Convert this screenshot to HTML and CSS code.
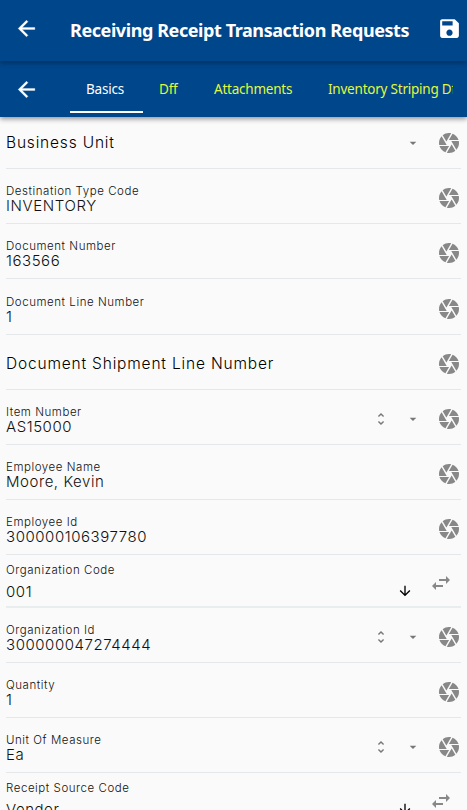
FILE: index.html
```html
<!DOCTYPE html>
<html lang="en">
<head>
<meta charset="utf-8">
<title>Receiving Receipt Transaction Requests</title>
<link rel="stylesheet" href="styles.css">
</head>
<body>
<svg class="defs" width="0" height="0">
<symbol id="back" viewBox="0 0 24 24"><path d="M20 11H7.83l5.59-5.59L12 4l-8 8 8 8 1.41-1.41L7.83 13H20v-2z"/></symbol>
<symbol id="save" viewBox="0 0 24 24"><path d="M17 3H5c-1.11 0-2 .9-2 2v14c0 1.1.89 2 2 2h14c1.1 0 2-.9 2-2V7l-4-4zm-5 16c-1.66 0-3-1.34-3-3s1.34-3 3-3 3 1.34 3 3-1.34 3-3 3zm3-10H5V5h10v4z"/></symbol>
<symbol id="camera" viewBox="0 0 24 24"><path d="M9.4 10.5l4.77-8.26C13.47 2.09 12.75 2 12 2c-2.4 0-4.6.85-6.32 2.25l3.66 6.35.06-.1zM21.54 9c-.92-2.92-3.15-5.26-6-6.34L11.88 9h9.66zm.26 1h-7.49l.29.5 4.76 8.25C21 16.97 22 14.61 22 12c0-.69-.07-1.35-.2-2zM8.54 12l-3.9-6.75C3.01 7.03 2 9.39 2 12c0 .69.07 1.35.2 2h7.49l-1.15-2zm-6.08 3c.92 2.92 3.15 5.26 6 6.34L12.12 15H2.46zm11.27 0l-3.9 6.76c.7.15 1.42.24 2.17.24 2.4 0 4.6-.85 6.32-2.25l-3.66-6.35-.93 1.6z"/></symbol>
<symbol id="drop" viewBox="0 0 24 24"><path d="M7 10l5 5 5-5z"/></symbol>
<symbol id="unfold" viewBox="0 0 24 24"><path d="M12 5.83L15.17 9l1.41-1.41L12 3 7.41 7.59 8.83 9 12 5.83zm0 12.34L8.83 15l-1.41 1.41L12 21l4.59-4.59L15.17 15 12 18.17z"/></symbol>
<symbol id="swap" viewBox="0 0 24 24"><path d="M6.99 11L3 15l3.99 4v-3H14v-2H6.99v-3zM21 9l-3.99-4v3H10v2h7.01v3L21 9z"/></symbol>
<symbol id="down" viewBox="0 0 24 24"><path d="M20 12l-1.41-1.41L13 16.17V4h-2v12.17l-5.58-5.59L4 12l8 8 8-8z"/></symbol>
</svg>
<header class="bar title-bar">
  <svg class="nav-icon"><use href="#back"/></svg>
  <h1>Receiving Receipt Transaction Requests</h1>
  <svg class="save-icon"><use href="#save"/></svg>
</header>
<nav class="bar tab-bar">
  <svg class="nav-icon"><use href="#back"/></svg>
  <div class="tabs">
    <span class="tab active">Basics</span><span class="tab dff">Dff</span><span class="tab attachments">Attachments</span><span class="tab striping">Inventory Striping Dff</span>
  </div>
</nav>
<main>
  <div class="row first"><div class="text"><div class="prompt unit">Business Unit</div></div><svg class="drop"><use href="#drop"/></svg><svg class="camera"><use href="#camera"/></svg></div>
  <div class="row"><div class="text"><div class="label">Destination Type Code</div><div class="value caps">INVENTORY</div></div><svg class="camera"><use href="#camera"/></svg></div>
  <div class="row"><div class="text"><div class="label">Document Number</div><div class="value">163566</div></div><svg class="camera"><use href="#camera"/></svg></div>
  <div class="row tall"><div class="text"><div class="label">Document Line Number</div><div class="value">1</div></div><svg class="camera"><use href="#camera"/></svg></div>
  <div class="row"><div class="text"><div class="prompt">Document Shipment Line Number</div></div><svg class="camera"><use href="#camera"/></svg></div>
  <div class="row"><div class="text"><div class="label">Item Number</div><div class="value item">AS15000</div></div><svg class="unfold"><use href="#unfold"/></svg><svg class="drop"><use href="#drop"/></svg><svg class="camera"><use href="#camera"/></svg></div>
  <div class="row"><div class="text"><div class="label">Employee Name</div><div class="value name">Moore, Kevin</div></div><svg class="camera"><use href="#camera"/></svg></div>
  <div class="row"><div class="text"><div class="label">Employee Id</div><div class="value long">300000106397780</div></div><svg class="camera"><use href="#camera"/></svg></div>
  <div class="row choice"><div class="text"><div class="label">Organization Code</div><div class="value">001</div></div><svg class="down"><use href="#down"/></svg><svg class="swap"><use href="#swap"/></svg></div>
  <div class="row"><div class="text"><div class="label">Organization Id</div><div class="value">300000047274444</div></div><svg class="unfold"><use href="#unfold"/></svg><svg class="drop"><use href="#drop"/></svg><svg class="camera"><use href="#camera"/></svg></div>
  <div class="row"><div class="text"><div class="label">Quantity</div><div class="value">1</div></div><svg class="camera"><use href="#camera"/></svg></div>
  <div class="row"><div class="text"><div class="label">Unit Of Measure</div><div class="value">Ea</div></div><svg class="unfold"><use href="#unfold"/></svg><svg class="drop"><use href="#drop"/></svg><svg class="camera"><use href="#camera"/></svg></div>
  <div class="row choice"><div class="text"><div class="label">Receipt Source Code</div><div class="value">Vendor</div></div><svg class="down"><use href="#down"/></svg><svg class="swap"><use href="#swap"/></svg></div>
</main>
</body>
</html>
```
FILE: styles.css
```css
* { box-sizing: border-box; }
body { margin: 0; height: 810px; overflow: hidden; display: flex; flex-direction: column; background: #fafafa; font-family: Inter, "Liberation Sans", sans-serif; font-weight: 300; }
.defs { position: absolute; }
svg { flex: none; fill: currentColor; }
.bar { flex: none; display: flex; align-items: center; background: #00468b; color: #fff; font-family: "Noto Sans", "Open Sans", sans-serif; font-weight: 400; }
.title-bar { height: 61px; padding: 0 5px 4px 14px; position: relative; z-index: 2; box-shadow: 0 2px 5px rgba(0,0,0,.32); }
.nav-icon { width: 25px; height: 25px; margin-right: 31px; stroke: currentColor; stroke-width: .3; }
.save-icon { width: 25px; height: 25px; }
h1 { flex: 1; margin: 3px 0 0; font-size: 18px; line-height: 24px; font-weight: 700; letter-spacing: -.42px; white-space: nowrap; }
.tab-bar { height: 56px; padding-right: 14px; padding-left: 14px; position: relative; z-index: 1; box-shadow: 0 2px 5px rgba(0,0,0,.42); }
.tabs { flex: 1; min-width: 0; height: 56px; display: flex; overflow: hidden; }
.tab { flex: none; height: 52px; padding: 18px 16px 0; font-size: 13.5px; line-height: 20px; letter-spacing: -.22px; white-space: nowrap; color: #e2f83c; }
.active { width: 73px; color: #fff; border-bottom: 2px solid #fff; }
.dff { width: 55px; }
.attachments { width: 114px; }
main { flex: 1; overflow: hidden; padding: 0 6px; }
.row { height: 55px; display: flex; border-bottom: 1px solid #e5e8eb; }
.first { height: 52px; }
.text { flex: 1; min-width: 0; padding-top: 15px; white-space: nowrap; }
.label { font-size: 11.5px; line-height: 14px; letter-spacing: .55px; color: #111; }
.value { font-size: 15px; line-height: 16px; letter-spacing: .55px; color: #111; }
.caps { letter-spacing: .6px; }
.prompt { margin-top: 5px; font-size: 15.5px; line-height: 18px; letter-spacing: .82px; color: #000; }
.first .prompt { margin-top: 2px; }
.camera { width: 24px; height: 24px; margin: 17px 0 0 16px; color: #888; }
.first .camera { margin-top: 14px; }
.drop, .unfold { width: 16px; height: 16px; margin: 21px 0 0 16px; color: #777; }
.first .drop { margin-top: 18px; }
.tall { height: 56px; }
.tall .text { padding-top: 16px; }
.tall .camera { margin-top: 18px; }
.choice { height: 53px; border-bottom: 2px solid #e8eeed; }
.choice .text { padding-top: 8px; }
.choice .value { margin-top: 7px; }
.down { width: 16px; height: 16px; margin: 28px 16px 0 0; color: #000; }
.swap { width: 24px; height: 24px; margin: 16px 8px 0 0; color: #888; }
```
